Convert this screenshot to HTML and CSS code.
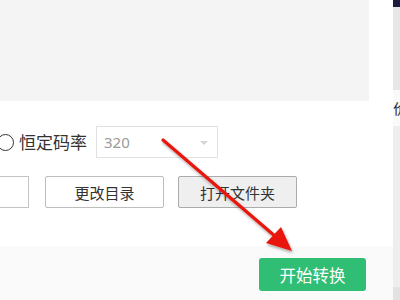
FILE: index.html
```html
<!DOCTYPE html>
<html lang="zh">
<head>
<meta charset="utf-8">
<link rel="stylesheet" href="styles.css">
</head>
<body>
<div class="app">
  <div class="main">
    <div class="preview"></div>
    <div class="options">
      <div class="row row-rate">
        <span class="radio"></span>
        <span class="label">恒定码率</span>
        <div class="select">
          <span class="select-value">320</span>
          <span class="caret"></span>
        </div>
      </div>
      <div class="row row-dir">
        <div class="path-input"></div>
        <button class="btn btn-white">更改目录</button>
        <button class="btn btn-gray">打开文件夹</button>
      </div>
    </div>
    <div class="footer">
      <button class="btn-start">开始转换</button>
    </div>
  </div>
  <div class="side">
    <div class="side-top"></div>
    <div class="side-gray"></div>
    <div class="side-white"><span class="side-char">价</span></div>
    <div class="side-rest"></div>
  </div>
  <svg class="arrow" width="400" height="300" viewBox="0 0 400 300">
    <defs>
      <filter id="sh" x="-20%" y="-20%" width="140%" height="140%">
        <feGaussianBlur in="SourceAlpha" stdDeviation="1.5"/>
        <feOffset dx="1" dy="2" result="b"/>
        <feComponentTransfer><feFuncA type="linear" slope="0.35"/></feComponentTransfer>
        <feMerge><feMergeNode/><feMergeNode in="SourceGraphic"/></feMerge>
      </filter>
    </defs>
    <g filter="url(#sh)">
      <line x1="163" y1="140" x2="276" y2="237" stroke="#e8170f" stroke-width="3.2" stroke-linecap="round"/>
      <polygon points="292,251 266,243 281,227" fill="#e8170f"/>
    </g>
  </svg>
</div>
</body>
</html>
```
FILE: styles.css
```css
* { box-sizing: border-box; }
html, body { margin: 0; padding: 0; }
body {
  width: 400px;
  height: 300px;
  overflow: hidden;
  font-family: "Noto Sans CJK SC", "Microsoft YaHei", sans-serif;
  color: #333;
  background: #fff;
}
.app {
  position: relative;
  display: flex;
  width: 400px;
  height: 300px;
}
.main {
  width: 393px;
  display: flex;
  flex-direction: column;
  background: #fff;
}
.preview {
  height: 101px;
  width: 369px;
  background: #f4f4f4;
}
.options {
  flex: 1;
  padding-top: 25px;
  display: flex;
  flex-direction: column;
  gap: 18px;
}
.row {
  display: flex;
  align-items: center;
  height: 32px;
}
.radio {
  width: 17px;
  height: 17px;
  border: 1px solid #333;
  border-radius: 50%;
  margin-left: -3px;
  flex: none;
}
.label {
  margin-left: 5px;
  font-size: 17px;
  line-height: 20px;
  letter-spacing: 0;
}
.select {
  margin-left: 9px;
  width: 122px;
  height: 32px;
  border: 1px solid #e2e2e2;
  display: flex;
  align-items: center;
  justify-content: space-between;
  padding: 0 9px 0 7px;
}
.select-value {
  font-family: "Noto Sans", "Open Sans", sans-serif;
  font-size: 15px;
  color: #9a9a9a;
}
.caret {
  width: 0;
  height: 0;
  border-left: 4px solid transparent;
  border-right: 4px solid transparent;
  border-top: 4px solid #d4d4d4;
  margin-top: 2px;
}
.path-input {
  width: 70px;
  height: 32px;
  margin-left: -41px;
  border: 1px solid #c4c4c4;
  background: #fff;
}
.btn {
  height: 32px;
  width: 119px;
  font-family: inherit;
  font-size: 15px;
  color: #333;
  padding: 0;
  border-radius: 2px;
}
.btn-white {
  margin-left: 16px;
  background: #fff;
  border: 1px solid #bdbdbd;
}
.btn-gray {
  margin-left: 14px;
  background: #efefef;
  border: 1px solid #ababab;
}
.footer {
  height: 54px;
  background: #fafafa;
  display: flex;
  justify-content: flex-end;
  align-items: flex-start;
  padding: 12px 27px 0 0;
}
.btn-start {
  width: 107px;
  height: 33px;
  background: #2fbe74;
  border: none;
  border-radius: 3px;
  color: #fff;
  font-family: inherit;
  font-size: 16.5px;
  padding: 0;
}
.side {
  width: 7px;
  display: flex;
  flex-direction: column;
  overflow: hidden;
}
.side-top { height: 7px; background: #1b1b3d; }
.side-gray { height: 83px; background: #e7e7e7; }
.side-white {
  height: 36px;
  background: #fafafa;
  display: flex;
  align-items: center;
  overflow: hidden;
}
.side-char {
  font-size: 15px;
  line-height: 16px;
  color: #333;
  white-space: nowrap;
  margin-left: 0;
}
.side-rest {
  flex: 1;
  background: #eeeeee;
  border-bottom: 13px solid #e2e2e2;
}
.arrow {
  position: absolute;
  left: 0;
  top: 0;
  pointer-events: none;
}
```
